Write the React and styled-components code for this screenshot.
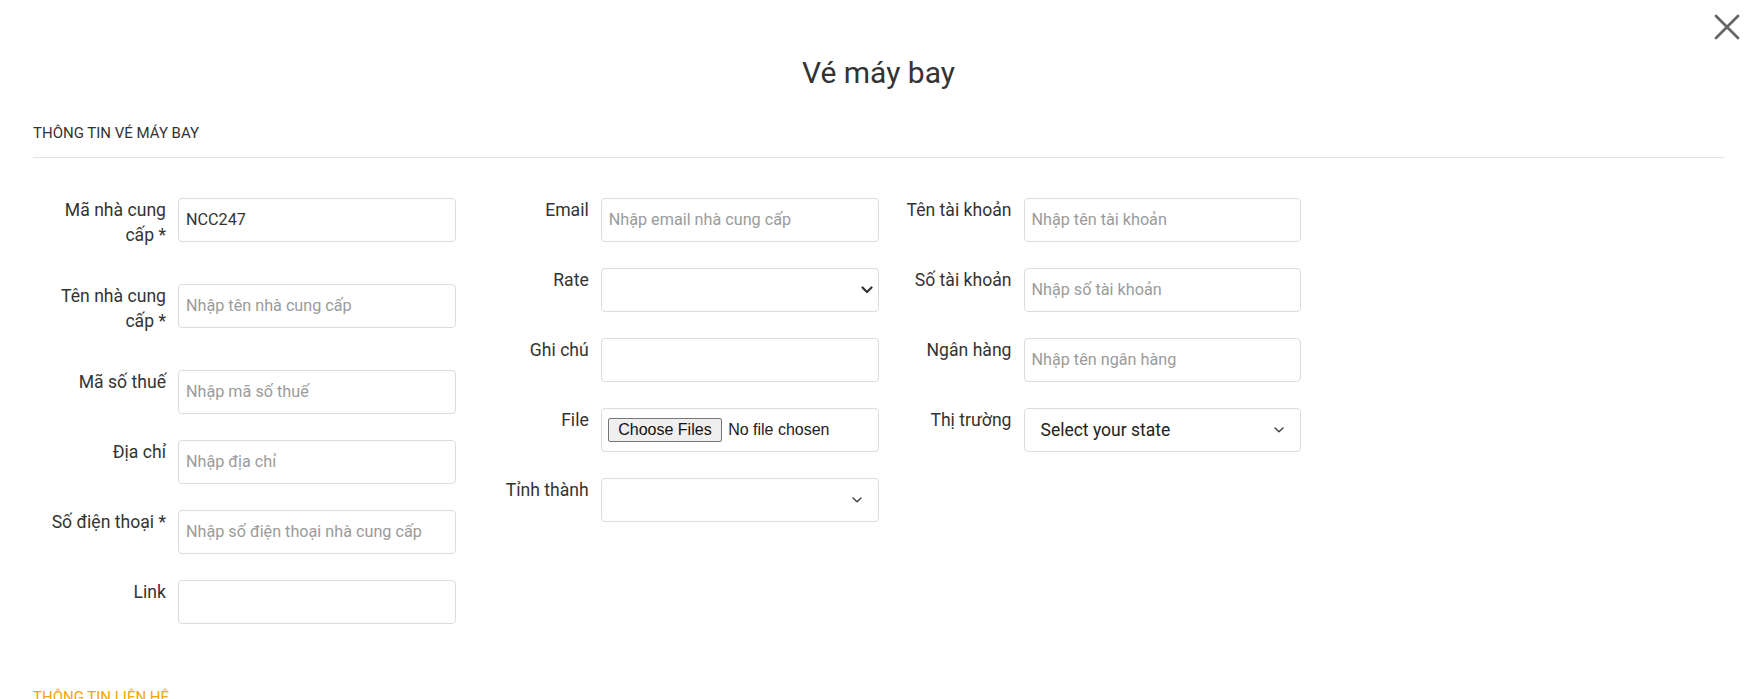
import React from "react";
import styled, { createGlobalStyle } from "styled-components";

const GlobalStyle = createGlobalStyle`
  html, body {
    margin: 0;
    padding: 0;
    background: #fff;
  }
  body {
    font-family: Roboto, "Noto Sans", Arial, sans-serif;
    color: #333;
  }
  * {
    box-sizing: border-box;
  }
`;

const Modal = styled.div`
  position: relative;
  padding: 55px 35px 0 33px;
  min-height: 699px;
  overflow: hidden;
`;

const CloseButton = styled.button`
  position: absolute;
  top: 14px;
  right: 19px;
  width: 26px;
  height: 26px;
  padding: 0;
  border: none;
  background: transparent;
  cursor: pointer;
  display: flex;
`;

const Title = styled.h2`
  margin: 0;
  text-align: center;
  font-size: 30px;
  font-weight: 400;
  line-height: 36px;
  color: #333;
`;

const SectionTitle = styled.h6`
  margin: ${(p) => (p.$first ? "31px" : "62px")} 0 0;
  padding-bottom: 12px;
  font-size: 15px;
  font-weight: 400;
  line-height: 22.5px;
  text-transform: uppercase;
  color: ${(p) => (p.$accent ? "#f8a400" : "#333")};
  border-bottom: ${(p) => (p.$first ? "1px solid #e5e5e5" : "none")};
`;

const FormGrid = styled.div`
  display: grid;
  grid-template-columns: repeat(4, 1fr);
  margin-top: 40px;
`;

const Column = styled.div`
  display: flex;
  flex-direction: column;
  gap: 26px;
`;

const Row = styled.div`
  display: grid;
  grid-template-columns: 133px 1fr;
  column-gap: 12px;
  align-items: start;
`;

const Label = styled.label`
  padding: 0 0 9px 12px;
  text-align: right;
  font-size: 17.6px;
  line-height: 25.5px;
  color: #333;
`;

const Input = styled.input`
  width: 100%;
  height: 44px;
  padding: 0 7px;
  border: 1px solid #dcdcdc;
  border-radius: 4px;
  font-family: Roboto, sans-serif;
  font-size: 16.2px;
  color: #333;
  background: #fff;
  outline: none;
  &::placeholder {
    color: #9b9b9b;
  }
`;

const FileInput = styled.input`
  width: 100%;
  height: 44px;
  padding: 0 6px;
  border: 1px solid #dcdcdc;
  border-radius: 4px;
  font-family: "Liberation Sans", Arial, sans-serif;
  font-size: 16px;
  color: #222;
  background: #fff;
  line-height: 42px;
  &::file-selector-button {
    height: 24px;
    padding: 0 9.5px;
    margin-right: 6px;
    border: 1px solid #767676;
    border-radius: 2px;
    background: #efefef;
    font-family: "Liberation Sans", Arial, sans-serif;
    font-size: 16px;
    color: #111;
  }
`;

const SelectWrap = styled.div`
  position: relative;
`;

const Select = styled.select`
  width: 100%;
  height: 44px;
  padding: 0 30px 0 16px;
  border: 1px solid #dcdcdc;
  border-radius: 4px;
  appearance: none;
  font-family: Roboto, sans-serif;
  font-size: 17.5px;
  color: #222;
  background: #fff;
  outline: none;
`;

const Arrow = styled.svg`
  position: absolute;
  top: 50%;
  right: ${(p) => (p.$bold ? "6px" : "17px")};
  transform: translateY(-50%);
  pointer-events: none;
`;

const Chevron = ({ bold }) =>
  bold ? (
    <Arrow $bold width="12" height="9" viewBox="0 0 12 9">
      <path d="M1.5 2 L6 6.5 L10.5 2" fill="none" stroke="#333" strokeWidth="2.2" strokeLinecap="round" strokeLinejoin="round" />
    </Arrow>
  ) : (
    <Arrow width="10" height="7" viewBox="0 0 10 7">
      <path d="M1 1.5 L5 5.2 L9 1.5" fill="none" stroke="#444" strokeWidth="1.5" strokeLinecap="round" strokeLinejoin="round" />
    </Arrow>
  );

const Field = ({ label, children }) => (
  <Row>
    <Label>{label}</Label>
    {children}
  </Row>
);

const SelectField = ({ label, bold, options = [] }) => (
  <Field label={label}>
    <SelectWrap>
      <Select defaultValue={options[0] || ""}>
        {options.length === 0 && <option value=""></option>}
        {options.map((o) => (
          <option key={o}>{o}</option>
        ))}
      </Select>
      <Chevron bold={bold} />
    </SelectWrap>
  </Field>
);

export default function App() {
  return (
    <>
      <GlobalStyle />
      <Modal>
        <CloseButton aria-label="Đóng">
          <svg width="26" height="26" viewBox="0 0 26 26">
            <path d="M2 2 L24 24 M24 2 L2 24" stroke="#666" strokeWidth="2.8" strokeLinecap="round" />
          </svg>
        </CloseButton>

        <Title>Vé máy bay</Title>

        <SectionTitle $first>Thông tin vé máy bay</SectionTitle>

        <FormGrid>
          <Column>
            <Field label="Mã nhà cung cấp *">
              <Input defaultValue="NCC247" />
            </Field>
            <Field label="Tên nhà cung cấp *">
              <Input placeholder="Nhập tên nhà cung cấp" />
            </Field>
            <Field label="Mã số thuế">
              <Input placeholder="Nhập mã số thuế" />
            </Field>
            <Field label="Địa chỉ">
              <Input placeholder="Nhập địa chỉ" />
            </Field>
            <Field label="Số điện thoại *">
              <Input placeholder="Nhập số điện thoại nhà cung cấp" />
            </Field>
            <Field label="Link">
              <Input />
            </Field>
          </Column>

          <Column>
            <Field label="Email">
              <Input placeholder="Nhập email nhà cung cấp" />
            </Field>
            <SelectField label="Rate" bold />
            <Field label="Ghi chú">
              <Input />
            </Field>
            <Field label="File">
              <FileInput type="file" multiple />
            </Field>
            <SelectField label="Tỉnh thành" />
          </Column>

          <Column>
            <Field label="Tên tài khoản">
              <Input placeholder="Nhập tên tài khoản" />
            </Field>
            <Field label="Số tài khoản">
              <Input placeholder="Nhập số tài khoản" />
            </Field>
            <Field label="Ngân hàng">
              <Input placeholder="Nhập tên ngân hàng" />
            </Field>
            <SelectField label="Thị trường" options={["Select your state"]} />
          </Column>

          <Column />
        </FormGrid>

        <SectionTitle $accent>Thông tin liên hệ</SectionTitle>
      </Modal>
    </>
  );
}
